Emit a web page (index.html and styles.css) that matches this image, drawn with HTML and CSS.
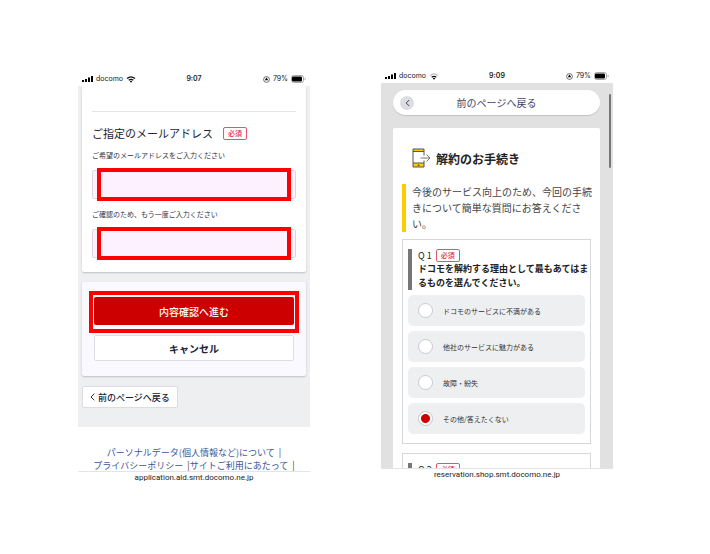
FILE: index.html
```html
<!DOCTYPE html>
<html lang="ja">
<head>
  <meta charset="UTF-8">
  <title>解約のお手続き</title>
  <link rel="stylesheet" href="styles.css">
</head>
<body>
  <main class="phones">
    <section class="phone">
      <div class="status">
        <span class="carrier">
          <svg width="11" height="6" viewBox="0 0 11 6"><path d="M0 4h2v2H0zM3 3h2v3H3zM6 1.5h2V6H6zM9 0h2v6H9z"/></svg>
          docomo
          <svg width="10" height="7" viewBox="0 0 10 7"><path d="M1 2.6Q5-.8 9 2.6M2.7 4.3Q5 2.4 7.3 4.3" fill="none" stroke="#111" stroke-width="1.3"/><path d="M3.8 5.2Q5 4.4 6.2 5.2L5 6.8z"/></svg>
        </span>
        <span class="clock">9:07</span>
        <span class="battery">
          <svg width="7" height="7" viewBox="0 0 7 7"><circle cx="3.5" cy="3.5" r="2.9" fill="none" stroke="#333" stroke-width=".7"/><path d="M3.5 1.5l1.7 2.8H1.8z"/></svg>
          79%
          <svg width="15" height="8" viewBox="0 0 15 8"><rect x=".5" y=".5" width="12" height="7" rx="2" fill="#fff" stroke="#aaa"/><rect x="1" y="1.5" width="10" height="5" rx="1"/><path d="M13.7 2.8v2.4q1-.3 1-1.2t-1-1.2z" fill="#999"/></svg>
        </span>
      </div>
      <div class="screen screen-mail">
        <form class="gray-area">
          <div class="card mail-card">
            <hr class="line">
            <h2 class="mail-title">ご指定のメールアドレス <span class="required">必須</span></h2>
            <label class="mail-label" for="mail">ご希望のメールアドレスをご入力ください</label>
            <div class="field">
              <input class="mail-input" type="email" id="mail">
              <span class="mark"></span>
            </div>
            <label class="mail-label" for="mailConfirm">ご確認のため、もう一度ご入力ください</label>
            <div class="field">
              <input class="mail-input" type="email" id="mailConfirm">
              <span class="mark"></span>
            </div>
          </div>
          <div class="card action-card">
            <div class="field">
              <button class="btn btn-next" type="button">内容確認へ進む</button>
              <span class="mark mark-wide"></span>
            </div>
            <button class="btn btn-cancel" type="button">キャンセル</button>
          </div>
          <button class="btn-back" type="button">
            <svg width="5" height="8" viewBox="0 0 5 8"><path d="M4.3.7L1 4l3.3 3.3" fill="none" stroke="#333" stroke-width="1"/></svg>
            前のページへ戻る
          </button>
        </form>
        <div class="links">
          <div><a href="#">パーソナルデータ(個人情報など)について</a>&nbsp; |</div>
          <div><a href="#">プライバシーポリシー</a>&nbsp; |<a href="#">サイトご利用にあたって</a>&nbsp; |</div>
        </div>
      </div>
      <div class="url">application.ald.smt.docomo.ne.jp</div>
    </section>

    <section class="phone phone-survey">
      <div class="status">
        <span class="carrier">
          <svg width="11" height="6" viewBox="0 0 11 6"><path d="M0 4h2v2H0zM3 3h2v3H3zM6 1.5h2V6H6zM9 0h2v6H9z"/></svg>
          docomo
          <svg width="10" height="7" viewBox="0 0 10 7"><path d="M1 2.6Q5-.8 9 2.6" fill="none" stroke="#bbb" stroke-width="1.2"/><path d="M2.7 4.3Q5 2.4 7.3 4.3" fill="none" stroke="#111" stroke-width="1.3"/><path d="M3.8 5.2Q5 4.4 6.2 5.2L5 6.8z"/></svg>
        </span>
        <span class="clock">9:09</span>
        <span class="battery">
          <svg width="7" height="7" viewBox="0 0 7 7"><circle cx="3.5" cy="3.5" r="2.9" fill="none" stroke="#333" stroke-width=".7"/><path d="M3.5 1.5l1.7 2.8H1.8z"/></svg>
          79%
          <svg width="15" height="8" viewBox="0 0 15 8"><rect x=".5" y=".5" width="12" height="7" rx="2" fill="#fff" stroke="#aaa"/><rect x="1" y="1.5" width="10" height="5" rx="1"/><path d="M13.7 2.8v2.4q1-.3 1-1.2t-1-1.2z" fill="#999"/></svg>
        </span>
      </div>
      <div class="screen screen-survey">
        <button class="pill" type="button">
          <span class="pill-icon"><svg width="5" height="8" viewBox="0 0 5 8"><path d="M4.2 1L1.2 4l3 3" fill="none" stroke="#444" stroke-width="1"/></svg></span>
          <span class="pill-text">前のページへ戻る</span>
        </button>
        <div class="survey">
          <h1 class="survey-title">
            <svg width="19" height="20" viewBox="0 0 19 20">
              <rect x="1" y="1" width="11" height="18" fill="#fff"/>
              <path d="M1 1h11v2.5H1zM1 15h11v4H1z" fill="#fc0"/>
              <path d="M12 7.5V1H1v18h11v-6.5M1 3.5h11M1 15h11" fill="none" stroke="#555" stroke-width="1"/>
              <path d="M5 17.7l1.5-1.5L8 17.7z" fill="#444"/>
              <path d="M8.5 10H18M14.5 6.5L18 10l-3.5 3.5" fill="none" stroke="#777" stroke-width="1"/>
            </svg>
            解約のお手続き
          </h1>
          <p class="lead">今後のサービス向上のため、今回の手続きについて簡単な質問にお答えください。</p>
          <fieldset class="question">
            <div class="question-head">
              <div class="question-no">Q 1 <span class="required">必須</span></div>
              <div class="question-text">ドコモを解約する理由として最もあてはまるものを選んでください。</div>
            </div>
            <label class="option"><input type="radio" name="reason">ドコモのサービスに不満がある</label>
            <label class="option"><input type="radio" name="reason">他社のサービスに魅力がある</label>
            <label class="option"><input type="radio" name="reason">故障・紛失</label>
            <label class="option"><input type="radio" name="reason" checked>その他/答えたくない</label>
          </fieldset>
          <fieldset class="question">
            <div class="question-head">
              <div class="question-no">Q 2 <span class="required">必須</span></div>
            </div>
          </fieldset>
        </div>
        <span class="scrollbar"></span>
      </div>
      <div class="url">reservation.shop.smt.docomo.ne.jp</div>
    </section>
  </main>
</body>
</html>
```
FILE: styles.css
```css
* {
  box-sizing: border-box;
}
body {
  margin: 0;
  background: #fff;
  color: #222;
  font-family: "Noto Sans CJK JP", sans-serif;
}
button, input {
  font-family: inherit;
}
.phones {
  display: grid;
  grid-template-columns: 1fr 1fr;
  gap: 71px;
  padding: 69px 97px 0 78px;
}
.phone {
  padding-top: 3px;
}
.phone-survey {
  padding-top: 0;
}

/* status bar */
.status {
  display: grid;
  grid-template-columns: 1fr auto 1fr;
  align-items: center;
  height: 14px;
  padding: 0 4px;
  font-family: Inter, sans-serif;
  font-size: 7px;
  line-height: 14px;
  color: #222;
}
.carrier, .battery {
  display: flex;
  align-items: center;
  gap: 3px;
}
.battery {
  justify-content: flex-end;
}
.clock {
  font-weight: 600;
}
.screen {
  position: relative;
  height: 386px;
  overflow: hidden;
  border-bottom: 1px solid #e4e4e8;
}
.url {
  font-family: Roboto, sans-serif;
  font-size: 8px;
  line-height: 12px;
  text-align: center;
  color: #222;
}

/* mail form */
.gray-area {
  height: 341px;
  padding: 0 4px;
  background: #eeeff1;
}
.card {
  padding: 0 10px;
  background: #fff;
  border-radius: 2px;
  box-shadow: 0 1px 2px #0003;
}
.mail-card {
  height: 186px;
  padding-top: 25px;
}
.line {
  height: 1px;
  margin: 0 0 13px;
  border: 0;
  background: #e4e5e9;
}
.mail-title {
  display: flex;
  align-items: center;
  gap: 10px;
  height: 16px;
  margin: 0 0 8px;
  font-size: 11px;
  font-weight: 400;
  color: #223;
}
.required {
  padding: 0 4px;
  border: 1px solid #e0546f;
  border-radius: 2px;
  background: #fff;
  font-size: 7px;
  font-weight: 500;
  line-height: 11px;
  color: #d9284b;
}
.mail-label {
  display: block;
  margin-bottom: 9px;
  font-size: 7px;
  line-height: 12px;
  color: #334;
}
.field {
  position: relative;
}
.mail-input {
  display: block;
  width: 100%;
  height: 29px;
  margin-bottom: 9px;
  padding: 0 12px;
  border: 1px solid #dcd8e2;
  border-radius: 2px;
  background: #fdf0ff;
  font-size: 11px;
}
.mark {
  position: absolute;
  inset: -2px 5px;
  border: 4px solid #f00;
  pointer-events: none;
}
.action-card {
  height: 94px;
  margin: 10px 0;
  padding: 15px 12px 0;
  background: #f9f9ff;
}
.mark-wide {
  inset: -6px -5px -8px;
}
.btn {
  display: block;
  width: 100%;
  padding: 0;
  border-radius: 2px;
  font-size: 10px;
}
.btn-next {
  height: 28px;
  margin-bottom: 10px;
  border: 0;
  background: #c00;
  font-weight: 500;
  color: #fff;
}
.btn-cancel {
  height: 26px;
  border: 1px solid #dddde4;
  background: #fff;
  font-weight: 700;
  color: #223;
}
.btn-back {
  display: flex;
  align-items: center;
  gap: 3px;
  height: 22px;
  padding: 0 7px;
  border: 1px solid #dcdde1;
  border-radius: 2px;
  background: #fff;
  font-size: 9px;
  font-weight: 500;
  color: #223;
}
.links {
  padding-top: 19px;
  font-size: 9px;
  line-height: 13px;
  text-align: center;
  white-space: nowrap;
  color: #444;
}
.links a {
  color: #3c559a;
  text-decoration: none;
}

/* survey */
.screen-survey {
  padding: 7px 13px 0 12px;
  background: #e1e1e1;
}
.pill {
  display: grid;
  grid-template-columns: 14px 1fr 14px;
  align-items: center;
  width: 100%;
  height: 25px;
  margin-bottom: 13px;
  padding: 0 7px;
  border: 0;
  border-radius: 13px;
  background: #fff;
  box-shadow: 0 1px 1px #0002;
  font-size: 10px;
  color: #446;
}
.pill-icon {
  display: flex;
  align-items: center;
  justify-content: center;
  height: 14px;
  border-radius: 50%;
  background: #dcdce4;
}
.survey {
  padding: 20px 9px 0;
  border-radius: 2px;
  background: #fff;
}
.survey-title {
  display: flex;
  align-items: center;
  gap: 5px;
  height: 20px;
  margin: 0 0 16px 10px;
  font-size: 12px;
  font-weight: 700;
  color: #222;
}
.lead {
  margin: 0 -4px 7px 0;
  padding-left: 6px;
  border-left: 4px solid #fc0;
  font-size: 10px;
  line-height: 16px;
  color: #444;
}
.question {
  min-width: 0;
  margin: 0 0 9px;
  padding: 9px 5px;
  border: 1px solid #d6d7da;
}
.question-head {
  margin: 0 -5px 5px 0;
  padding-left: 6px;
  border-left: 4px solid #777;
}
.question-no {
  display: flex;
  align-items: center;
  gap: 4px;
  font-size: 9px;
  line-height: 13px;
}
.question-text {
  font-size: 9px;
  font-weight: 700;
  line-height: 14px;
}
.option {
  display: flex;
  align-items: center;
  gap: 10px;
  height: 31px;
  margin-bottom: 5px;
  padding: 0 10px;
  border-radius: 5px;
  background: #eeeff1;
  font-size: 7px;
  color: #333;
}
.option:last-child {
  margin-bottom: 0;
}
.option input {
  appearance: none;
  width: 15px;
  height: 15px;
  margin: 0;
  border: 1px solid #c8c9cf;
  border-radius: 50%;
  background: #fff;
}
.option input:checked {
  background: radial-gradient(circle, #c00 4px, #fff 5px);
}
.scrollbar {
  position: absolute;
  top: 11px;
  right: 2px;
  width: 2px;
  height: 74px;
  border-radius: 1px;
  background: #777;
}
```
